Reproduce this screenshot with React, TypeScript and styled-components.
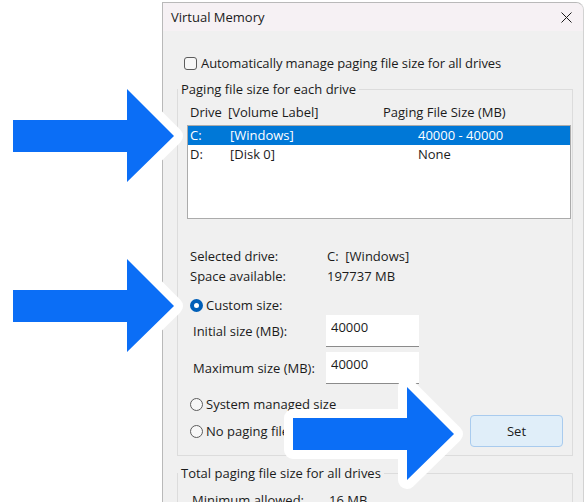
import styled, { createGlobalStyle } from "styled-components";

const GlobalStyle = createGlobalStyle`
  html, body {
    margin: 0;
    background: #ffffff;
  }
  body {
    font: 13px/20px "Segoe UI", "Open Sans", sans-serif;
    color: #1b1b1b;
  }
`;

const Stage = styled.div`
  position: relative;
  width: 586px;
  height: 502px;
  overflow: hidden;
  box-sizing: border-box;
  padding: 2px 0 0 162px;
`;

const Dialog = styled.div`
  width: 422px;
  height: 540px;
  box-sizing: border-box;
  background: #f0f0f0;
  border: 1px solid #b9b9b9;
  border-right-color: #d2d2d2;
  border-radius: 0 8px 0 0;
`;

const TitleBar = styled.div`
  height: 28px;
  display: flex;
  align-items: center;
  justify-content: space-between;
  padding: 0 11px 0 8px;
  background: #f6f1f4;
  border-radius: 0 7px 0 0;
`;

const Body = styled.div`
  padding-left: 14px;
`;

const CheckRow = styled.label`
  display: flex;
  align-items: center;
  gap: 4px;
  height: 20px;
  margin: 22px 0 6px 7px;
  letter-spacing: -0.08px;
`;

const CheckBox = styled.span`
  width: 13px;
  height: 13px;
  box-sizing: border-box;
  border: 1px solid #5c5c5c;
  border-radius: 3px;
  background: #f7f7f7;
`;

const Group = styled.fieldset`
  width: 396px;
  min-width: 0;
  box-sizing: border-box;
  margin: 0;
  padding: 0 0 8px 0;
  border: 1px solid #dcdcdc;
  & + & {
    margin-top: 7px;
  }
`;

const Legend = styled.legend`
  padding: 0 3px;
  line-height: 20px;
`;

const HeaderRow = styled.div`
  display: grid;
  grid-template-columns: 38px 155px auto;
  height: 20px;
  margin: 3px 0 3px 12px;
`;

const ListBox = styled.div`
  width: 384px;
  height: 94px;
  box-sizing: border-box;
  margin-left: 9px;
  background: #ffffff;
  border: 1px solid #ababab;
`;

const DriveRow = styled.div<{ $selected?: boolean }>`
  display: grid;
  grid-template-columns: 40px 188px auto;
  height: 19px;
  line-height: 19px;
  padding-left: 2px;
  background: ${({ $selected }) => ($selected ? "#0078d7" : "transparent")};
  color: ${({ $selected }) => ($selected ? "#ffffff" : "#1b1b1b")};
`;

const InfoGrid = styled.div<{ $top: number; $left: number }>`
  display: grid;
  grid-template-columns: 137px auto;
  grid-auto-rows: 20px;
  margin: ${({ $top, $left }) => `${$top}px 0 0 ${$left}px`};
`;

const RadioRow = styled.label<{ $top: number }>`
  display: flex;
  align-items: center;
  gap: 3px;
  height: 20px;
  margin: ${({ $top }) => `${$top}px 0 0 12px`};
`;

const Radio = styled.span<{ $checked?: boolean }>`
  width: 13px;
  height: 13px;
  box-sizing: border-box;
  border-radius: 50%;
  background: ${({ $checked }) => ($checked ? "#ffffff" : "#f7f7f7")};
  border: ${({ $checked }) =>
    $checked ? "4px solid #005fb8" : "1px solid #5c5c5c"};
`;

const FieldRow = styled.div<{ $top: number }>`
  display: flex;
  align-items: center;
  margin: ${({ $top }) => `${$top}px 0 0 15px`};
`;

const FieldLabel = styled.span`
  width: 133px;
`;

const TextBox = styled.input`
  width: 93px;
  height: 32px;
  box-sizing: border-box;
  padding: 3px 5px 10px;
  border: 0;
  border-bottom: 1px solid #8b8b8b;
  background: #ffffff;
  font: inherit;
  color: #1b1b1b;
  outline: none;
`;

const ActionRow = styled.div`
  display: flex;
  align-items: center;
  justify-content: space-between;
  margin-top: 1px;
  padding-right: 9px;
`;

const Button = styled.button`
  width: 93px;
  height: 32px;
  box-sizing: border-box;
  background: #e0eef9;
  border: 1px solid #a9cbee;
  border-radius: 4px;
  font: inherit;
  color: #1b1b1b;
`;

// big call-out arrow, drawn over the dialog
const Pointer = styled.svg`
  position: absolute;
  width: 181px;
  height: 113px;
  overflow: visible;
`;

const Arrow = ({ x, y }: { x: number; y: number }) => (
  <Pointer style={{ left: x - 10, top: y - 10 }} viewBox="0 0 181 113">
    <polygon
      points="10,41 124,41 124,10 171,57 124,103 124,73 10,73"
      fill="#0b6ef6"
      stroke="#ffffff"
      strokeWidth="18"
      strokeLinejoin="round"
      paintOrder="stroke"
    />
  </Pointer>
);

const App = () => {
  return (
    <Stage>
      <GlobalStyle />
      <Dialog>
        <TitleBar>
          <span>Virtual Memory</span>
          <svg width="11" height="11" viewBox="0 0 11 11">
            <path d="M0.5 0.5L10.5 10.5M10.5 0.5L0.5 10.5" stroke="#1b1b1b" strokeWidth="1" />
          </svg>
        </TitleBar>
        <Body>
          <CheckRow>
            <CheckBox />
            Automatically manage paging file size for all drives
          </CheckRow>
          <Group>
            <Legend>Paging file size for each drive</Legend>
            <HeaderRow>
              <span>Drive</span>
              <span>[Volume Label]</span>
              <span>Paging File Size (MB)</span>
            </HeaderRow>
            <ListBox>
              <DriveRow $selected>
                <span>C:</span>
                <span>[Windows]</span>
                <span>40000 - 40000</span>
              </DriveRow>
              <DriveRow>
                <span>D:</span>
                <span>[Disk 0]</span>
                <span>None</span>
              </DriveRow>
            </ListBox>
            <InfoGrid $top={27} $left={12}>
              <span>Selected drive:</span>
              <span>C:&nbsp; [Windows]</span>
              <span>Space available:</span>
              <span>197737 MB</span>
            </InfoGrid>
            <RadioRow $top={9}>
              <Radio $checked />
              Custom size:
            </RadioRow>
            <FieldRow $top={0}>
              <FieldLabel>Initial size (MB):</FieldLabel>
              <TextBox readOnly value="40000" />
            </FieldRow>
            <FieldRow $top={5}>
              <FieldLabel>Maximum size (MB):</FieldLabel>
              <TextBox readOnly value="40000" />
            </FieldRow>
            <RadioRow $top={10}>
              <Radio />
              System managed size
            </RadioRow>
            <ActionRow>
              <RadioRow $top={0}>
                <Radio />
                No paging file
              </RadioRow>
              <Button>Set</Button>
            </ActionRow>
          </Group>
          <Group>
            <Legend>Total paging file size for all drives</Legend>
            <InfoGrid $top={7} $left={14}>
              <span>Minimum allowed:</span>
              <span>16 MB</span>
            </InfoGrid>
          </Group>
        </Body>
      </Dialog>
      <Arrow x={13} y={89} />
      <Arrow x={13} y={259} />
      <Arrow x={293} y={387} />
    </Stage>
  );
};

export default App;
